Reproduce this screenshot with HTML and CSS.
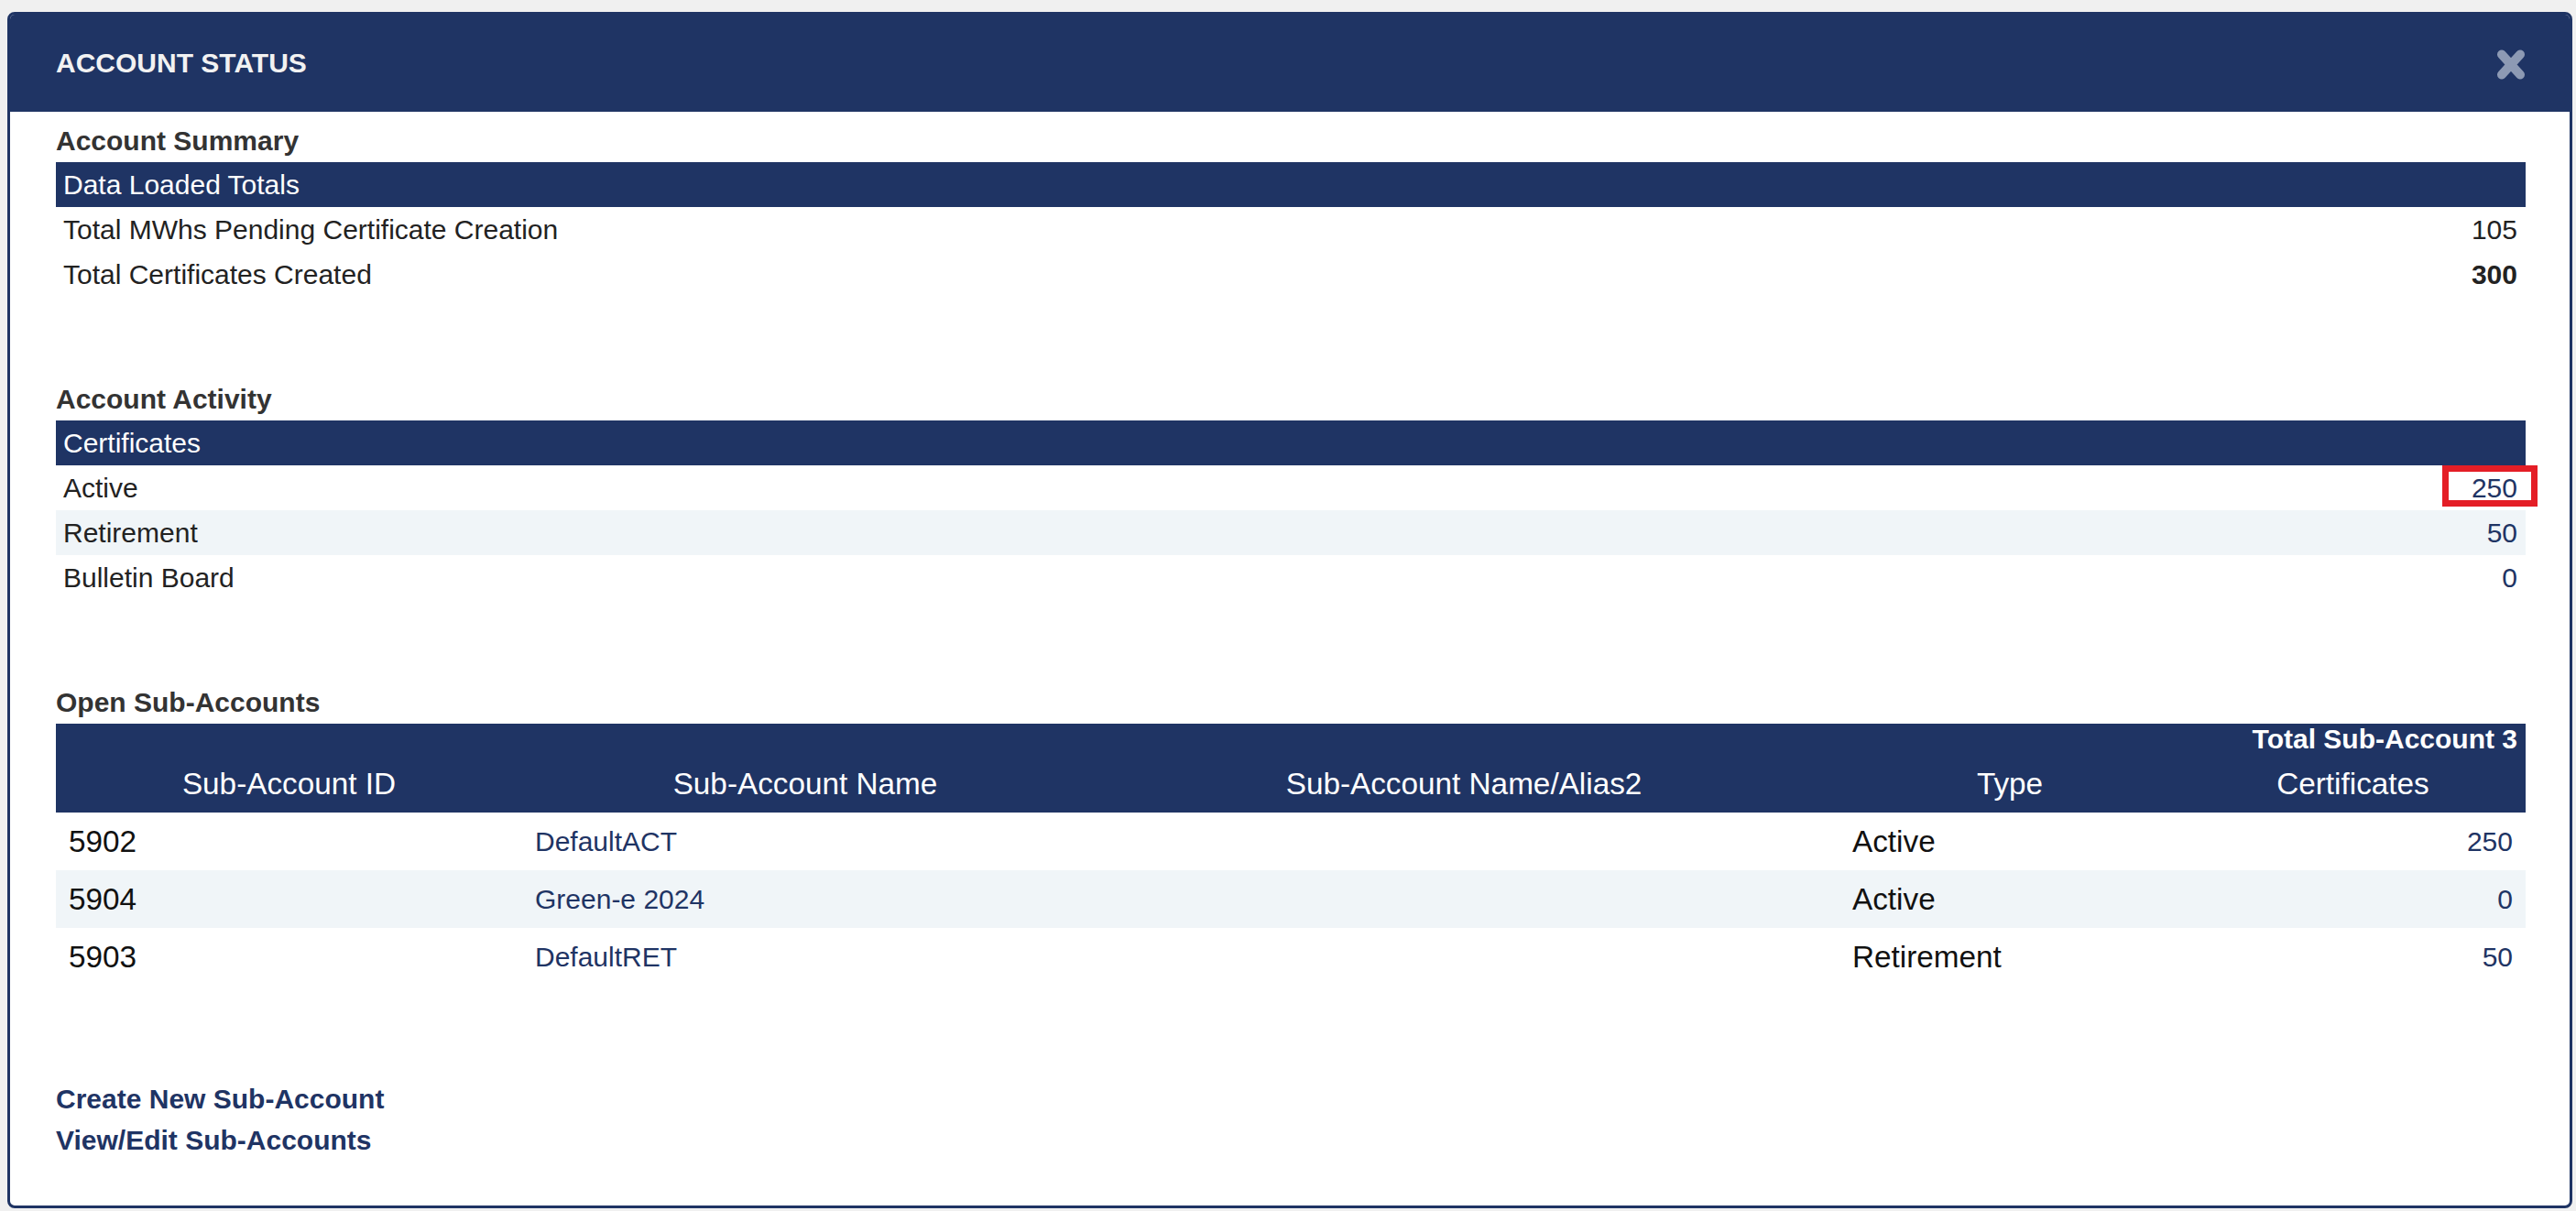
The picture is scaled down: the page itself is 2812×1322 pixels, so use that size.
FILE: index.html
```html
<!DOCTYPE html>
<html lang="en">
<head>
    <meta charset="UTF-8">
    <meta name="viewport" content="width=device-width, initial-scale=1.0">
    <title>Account Status</title>
    <link rel="stylesheet" href="styles.css">
</head>
<body>
    <div class="modal">
        <div class="modal-header">
            <h1 class="modal-title">ACCOUNT STATUS</h1>
            <button class="close-btn" title="Close">
                <svg width="32" height="35" viewBox="0 0 32 35">
                    <path d="M6 6.5 L26 28.5 M26 6.5 L6 28.5" stroke="currentColor" stroke-width="10" stroke-linecap="round" fill="none"/>
                </svg>
            </button>
        </div>
        <div class="modal-body">
            <section class="block">
                <h2 class="block-title">Account Summary</h2>
                <table class="stat-table">
                    <thead>
                        <tr><th colspan="2">Data Loaded Totals</th></tr>
                    </thead>
                    <tbody>
                        <tr>
                            <td>Total MWhs Pending Certificate Creation</td>
                            <td class="num">105</td>
                        </tr>
                        <tr>
                            <td>Total Certificates Created</td>
                            <td class="num strong">300</td>
                        </tr>
                    </tbody>
                </table>
            </section>

            <section class="block">
                <h2 class="block-title">Account Activity</h2>
                <table class="stat-table striped">
                    <thead>
                        <tr><th colspan="2">Certificates</th></tr>
                    </thead>
                    <tbody>
                        <tr>
                            <td>Active</td>
                            <td class="num link flagged">250</td>
                        </tr>
                        <tr>
                            <td>Retirement</td>
                            <td class="num link">50</td>
                        </tr>
                        <tr>
                            <td>Bulletin Board</td>
                            <td class="num link">0</td>
                        </tr>
                    </tbody>
                </table>
            </section>

            <section class="block last">
                <h2 class="block-title">Open Sub-Accounts</h2>
                <table class="sub-table striped">
                    <colgroup>
                        <col class="col-id">
                        <col class="col-name">
                        <col class="col-alias">
                        <col class="col-type">
                        <col>
                    </colgroup>
                    <thead>
                        <tr><th colspan="5" class="total">Total Sub-Account 3</th></tr>
                        <tr class="labels">
                            <th>Sub-Account ID</th>
                            <th>Sub-Account Name</th>
                            <th>Sub-Account Name/Alias2</th>
                            <th>Type</th>
                            <th>Certificates</th>
                        </tr>
                    </thead>
                    <tbody>
                        <tr>
                            <td>5902</td>
                            <td class="link small">DefaultACT</td>
                            <td></td>
                            <td>Active</td>
                            <td class="num link small">250</td>
                        </tr>
                        <tr>
                            <td>5904</td>
                            <td class="link small">Green-e 2024</td>
                            <td></td>
                            <td>Active</td>
                            <td class="num link small">0</td>
                        </tr>
                        <tr>
                            <td>5903</td>
                            <td class="link small">DefaultRET</td>
                            <td></td>
                            <td>Retirement</td>
                            <td class="num link small">50</td>
                        </tr>
                    </tbody>
                </table>
            </section>

            <div class="actions">
                <a href="#" class="action-link">Create New Sub-Account</a>
                <a href="#" class="action-link">View/Edit Sub-Accounts</a>
            </div>
        </div>
    </div>
</body>
</html>
```

FILE: styles.css
```css
body {
    background-color: #f0f0f0;
    font-family: "Liberation Sans", Arial, sans-serif;
    color: #222222;
    margin: 0;
    padding: 13px 4px 0 8px;
}

.modal {
    background-color: #ffffff;
    border: 3px solid #1f3464;
    border-radius: 8px;
    overflow: hidden;
}

.modal-header {
    background-color: #1f3464;
    height: 106px;
    padding: 0 48px 0 50px;
    display: flex;
    align-items: center;
    justify-content: space-between;
}

.modal-title {
    margin: 0;
    color: #f2f2f2;
    font-size: 30px;
    font-weight: bold;
}

.close-btn {
    background: none;
    border: none;
    padding: 0;
    margin-top: 2px;
    color: #8d9ab4;
    cursor: pointer;
    display: flex;
}

.modal-body {
    padding: 15px 48px 49px 50px;
}

.block {
    margin-bottom: 95px;
}

.block.last {
    margin-bottom: 101px;
}

.block-title {
    margin: 0 0 6px;
    font-size: 30px;
    line-height: 34px;
    font-weight: bold;
    color: #333333;
}

/* summary / activity tables */
.stat-table {
    width: 100%;
    border-collapse: collapse;
    font-size: 30px;
}

.stat-table th {
    background-color: #1f3464;
    color: #ffffff;
    font-weight: normal;
    text-align: left;
    height: 49px;
    padding: 0 8px;
}

.stat-table td {
    height: 49px;
    padding: 0 9px 0 8px;
}

.striped tbody tr:nth-child(even) {
    background-color: #f0f5f8;
}

.num {
    text-align: right;
}

.strong {
    font-weight: bold;
}

.link {
    color: #1f3464;
}

.flagged {
    position: relative;
}

.flagged::after {
    content: "";
    position: absolute;
    top: 0;
    right: -13px;
    width: 104px;
    height: 45px;
    border: 7px solid #e41e26;
    box-sizing: border-box;
}

/* sub-account table */
.sub-table {
    width: 100%;
    border-collapse: collapse;
    table-layout: fixed;
    font-size: 33.3px;
}

.col-id { width: 509px; }
.col-name { width: 618px; }
.col-alias { width: 820px; }
.col-type { width: 372px; }

.sub-table thead {
    background-color: #1f3464;
    color: #ffffff;
}

.sub-table th.total {
    text-align: right;
    font-size: 30px;
    font-weight: bold;
    line-height: 32px;
    padding: 1px 9px 0;
}

.sub-table .labels th {
    font-weight: normal;
    text-align: center;
    line-height: 38px;
    padding: 14px 0 12px;
}

.sub-table td {
    height: 63px;
    padding: 0 14px;
    color: #111111;
}

.sub-table td.link {
    color: #1f3464;
}

.sub-table td.small {
    font-size: 30px;
}

.actions {
    display: flex;
    flex-direction: column;
    align-items: flex-start;
}

.action-link {
    color: #1f3464;
    font-size: 30px;
    font-weight: bold;
    line-height: 45px;
    text-decoration: none;
}
```
